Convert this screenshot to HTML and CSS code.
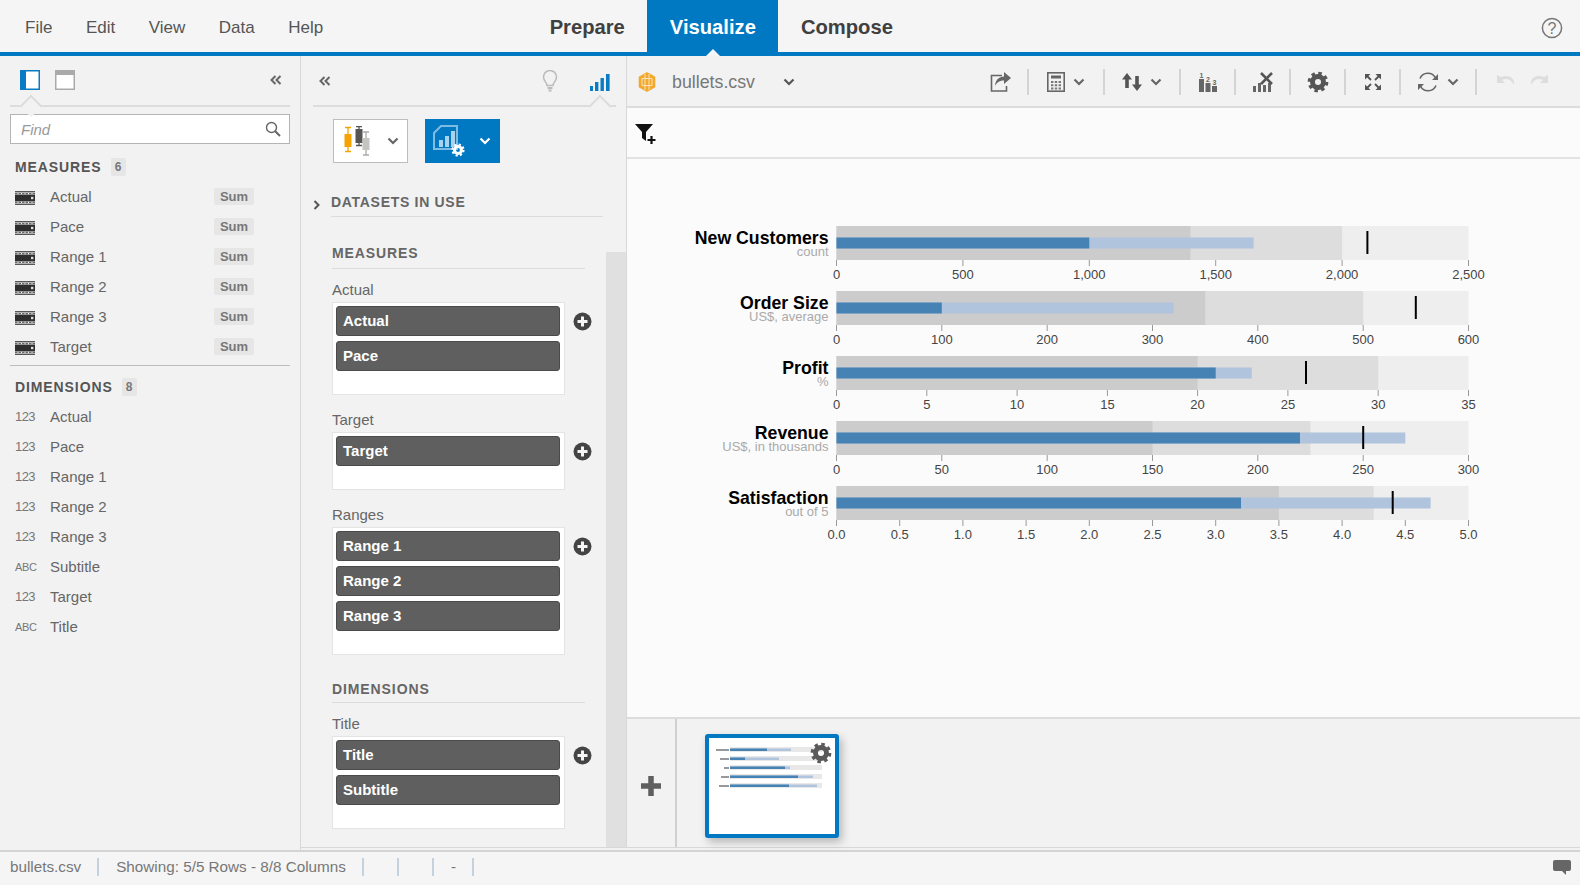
FILE: index.html
```html
<!DOCTYPE html>
<html lang="en">
<head>
    <meta charset="UTF-8">
    <title>bullets.csv - Visualize</title>
    <link rel="stylesheet" href="styles.css">
</head>
<body>
    <svg class="defs" width="0" height="0">
        <symbol id="i-measure" viewBox="0 0 20 14">
            <rect y="0" width="20" height="1.4" fill="#555"/>
            <path d="M0 2.7h20" stroke="#666" stroke-width="1.2" stroke-dasharray="2.5 1"/>
            <rect y="3.6" width="20" height="6.8" fill="#2e2e2e"/>
            <rect x="16" y="5.8" width="2.4" height="2.4" fill="#ddd"/>
            <path d="M0 11.3h20" stroke="#666" stroke-width="1.2" stroke-dasharray="2.5 1"/>
            <rect y="12.6" width="20" height="1.4" fill="#555"/>
        </symbol>
        <symbol id="i-chev" viewBox="0 0 12 8">
            <path d="M1.5 1.5L6 6l4.5-4.5" fill="none" stroke="currentColor" stroke-width="2.2"/>
        </symbol>
        <symbol id="i-back" viewBox="0 0 12 10">
            <path d="M5.5 1L1.5 5l4 4M10.5 1l-4 4 4 4" fill="none" stroke="#666" stroke-width="2"/>
        </symbol>
        <symbol id="i-plus" viewBox="0 0 19 19">
            <circle cx="9.5" cy="9.5" r="9" fill="#444"/>
            <path d="M9.5 4.5v10M4.5 9.5h10" stroke="#f5f5f5" stroke-width="3"/>
        </symbol>
        <symbol id="i-gear" viewBox="0 0 24 24">
            <circle cx="12" cy="12" r="6" fill="none" stroke="currentColor" stroke-width="5.4"/>
            <circle cx="12" cy="12" r="9.6" fill="none" stroke="currentColor" stroke-width="3.4" stroke-dasharray="3.8 3.74"/>
        </symbol>
    </svg>

    <header class="topbar">
        <nav class="menu">
            <span>File</span>
            <span>Edit</span>
            <span>View</span>
            <span>Data</span>
            <span>Help</span>
        </nav>
        <nav class="tabs">
            <span class="tab">Prepare</span>
            <span class="tab tab-on">Visualize</span>
            <span class="tab">Compose</span>
        </nav>
        <svg class="help" width="22" height="22" viewBox="0 0 22 22">
            <circle cx="11" cy="11" r="9.6" fill="none" stroke="#777" stroke-width="1.5"/>
            <text x="11" y="16.5" text-anchor="middle" class="help-q">?</text>
        </svg>
    </header>

    <main class="main">
        <aside class="left">
            <div class="panel-head panel-head-left">
                <svg width="20" height="20" viewBox="0 0 20 20">
                    <rect x="0.75" y="0.75" width="18.5" height="18.5" fill="#fff" stroke="#0a7cc4" stroke-width="1.5"/>
                    <rect x="0" y="0" width="6" height="20" fill="#0a7cc4"/>
                </svg>
                <svg class="head-second" width="20" height="20" viewBox="0 0 20 20">
                    <rect x="0.75" y="0.75" width="18.5" height="18.5" fill="#fff" stroke="#aaa" stroke-width="1.5"/>
                    <rect x="0" y="0" width="20" height="5" fill="#aaa"/>
                </svg>
                <svg class="head-back" width="12" height="10"><use href="#i-back"/></svg>
            </div>
            <div class="find">
                <span>Find</span>
                <svg width="16" height="16" viewBox="0 0 16 16">
                    <circle cx="6.5" cy="6.5" r="5" fill="none" stroke="#666" stroke-width="1.4"/>
                    <path d="M10.2 10.2L15 15" stroke="#666" stroke-width="2"/>
                </svg>
            </div>

            <h3 class="list-head">MEASURES <b class="count">6</b></h3>
            <ul class="fields">
                <li><svg width="20" height="14"><use href="#i-measure"/></svg><span class="name">Actual</span><b class="sum">Sum</b></li>
                <li><svg width="20" height="14"><use href="#i-measure"/></svg><span class="name">Pace</span><b class="sum">Sum</b></li>
                <li><svg width="20" height="14"><use href="#i-measure"/></svg><span class="name">Range 1</span><b class="sum">Sum</b></li>
                <li><svg width="20" height="14"><use href="#i-measure"/></svg><span class="name">Range 2</span><b class="sum">Sum</b></li>
                <li><svg width="20" height="14"><use href="#i-measure"/></svg><span class="name">Range 3</span><b class="sum">Sum</b></li>
                <li><svg width="20" height="14"><use href="#i-measure"/></svg><span class="name">Target</span><b class="sum">Sum</b></li>
            </ul>
            <hr class="rule">
            <h3 class="list-head list-head-dim">DIMENSIONS <b class="count">8</b></h3>
            <ul class="fields">
                <li><i class="num">123</i><span class="name">Actual</span></li>
                <li><i class="num">123</i><span class="name">Pace</span></li>
                <li><i class="num">123</i><span class="name">Range 1</span></li>
                <li><i class="num">123</i><span class="name">Range 2</span></li>
                <li><i class="num">123</i><span class="name">Range 3</span></li>
                <li><i class="abc">ABC</i><span class="name">Subtitle</span></li>
                <li><i class="num">123</i><span class="name">Target</span></li>
                <li><i class="abc">ABC</i><span class="name">Title</span></li>
            </ul>
        </aside>

        <section class="mid">
            <div class="track"></div>
            <div class="panel-head panel-head-mid">
                <svg width="12" height="10"><use href="#i-back"/></svg>
                <svg class="bulb" width="16" height="22" viewBox="0 0 16 22">
                    <path d="M5 15.5C5 12.5 1.5 11 1.5 7a6.5 6.5 0 0 1 13 0c0 4-3.5 5.5-3.5 8.5z" fill="none" stroke="#bbb" stroke-width="1.5"/>
                    <path d="M5.5 18h5M6.5 20.5h3" stroke="#bbb" stroke-width="2"/>
                </svg>
                <svg class="bars" width="20" height="17" viewBox="0 0 20 17">
                    <rect x="0" y="12" width="3" height="5" fill="#0a7cc4"/>
                    <rect x="5" y="8" width="3.4" height="9" fill="#0a7cc4"/>
                    <rect x="10.5" y="4" width="3.4" height="13" fill="#0a7cc4"/>
                    <rect x="16" y="0" width="3.6" height="17" fill="#0a7cc4"/>
                </svg>
            </div>

            <div class="chart-btns">
                <div class="chart-btn">
                    <svg width="30" height="30" viewBox="0 0 30 30">
                        <path d="M4 1.5h6M7 1.5v24M4 25.5h6" stroke="#f5a300" stroke-width="1.3" fill="none"/>
                        <rect x="3.5" y="8" width="7" height="13" fill="#f5a300"/>
                        <path d="M15 0.5h6M18 0.5v19M15 19.5h6" stroke="#555" stroke-width="1.3" fill="none"/>
                        <rect x="14.5" y="3" width="7" height="14" fill="#555"/>
                        <path d="M22 6h6M25 6v23M22 29h6" stroke="#aaa" stroke-width="1.3" fill="none"/>
                        <rect x="21.5" y="12" width="7" height="12" fill="#c4c4c0"/>
                    </svg>
                    <svg class="btn-chev" width="12" height="8"><use href="#i-chev"/></svg>
                </div>
                <div class="chart-btn chart-btn-on">
                    <svg width="32" height="32" viewBox="0 0 32 32">
                        <path d="M8 1h16v23H1V8z" fill="none" stroke="#7fbce4" stroke-width="2"/>
                        <rect x="6" y="15" width="4" height="7" fill="#a9d2ee"/>
                        <rect x="12" y="11" width="4" height="11" fill="#a9d2ee"/>
                        <rect x="18" y="6" width="4" height="16" fill="#a9d2ee"/>
                        <use href="#i-gear" x="18" y="18" width="14" height="14" color="#fff"/>
                    </svg>
                    <svg class="btn-chev" width="12" height="8"><use href="#i-chev"/></svg>
                </div>
            </div>

            <div class="datasets">
                <svg width="8" height="12" viewBox="0 0 8 12"><path d="M1.5 2l4 4-4 4" fill="none" stroke="#555" stroke-width="2"/></svg>
                <h3>DATASETS IN USE</h3>
            </div>

            <h3 class="group-head">MEASURES</h3>
            <label class="field-label">Actual</label>
            <div class="drop-row">
                <div class="drop">
                    <div class="pill">Actual</div>
                    <div class="pill">Pace</div>
                </div>
                <svg class="plus" width="19" height="19"><use href="#i-plus"/></svg>
            </div>
            <label class="field-label">Target</label>
            <div class="drop-row">
                <div class="drop">
                    <div class="pill">Target</div>
                </div>
                <svg class="plus" width="19" height="19"><use href="#i-plus"/></svg>
            </div>
            <label class="field-label">Ranges</label>
            <div class="drop-row">
                <div class="drop">
                    <div class="pill">Range 1</div>
                    <div class="pill">Range 2</div>
                    <div class="pill">Range 3</div>
                </div>
                <svg class="plus" width="19" height="19"><use href="#i-plus"/></svg>
            </div>

            <h3 class="group-head group-head-dim">DIMENSIONS</h3>
            <label class="field-label">Title</label>
            <div class="drop-row">
                <div class="drop">
                    <div class="pill">Title</div>
                    <div class="pill">Subtitle</div>
                </div>
                <svg class="plus" width="19" height="19"><use href="#i-plus"/></svg>
            </div>
        </section>

        <section class="right">
            <div class="toolbar">
                <svg class="hex" width="20" height="20" viewBox="0 0 20 20">
                    <path d="M10 1l7.5 4.3v9.4L10 19l-7.5-4.3V5.3z" fill="#f2a92e" stroke="#f2a92e" stroke-width="1.6" stroke-linejoin="round"/>
                    <path d="M5 6.5h10v7H5zM8 2v16M12 2v16" fill="none" stroke="#fbe3b8" stroke-width="1"/>
                </svg>
                <span class="file-name">bullets.csv</span>
                <svg class="file-chev" width="12" height="8"><use href="#i-chev"/></svg>

                <div class="tools">
                    <div class="tool tool-sep">
                        <svg width="22" height="20" viewBox="0 0 22 20">
                            <path d="M12 3.5H1.5V19h15v-5" fill="none" stroke="#666" stroke-width="1.6"/>
                            <path d="M14 0l7 6-7 6V8.5C10 8.5 7 10 5 14c.5-6 4-9.5 9-9.5z" fill="#666"/>
                        </svg>
                    </div>
                    <div class="tool tool-wide tool-sep">
                        <svg width="18" height="20" viewBox="0 0 18 20">
                            <rect x="0.8" y="0.8" width="16.4" height="18.4" fill="none" stroke="#666" stroke-width="1.6"/>
                            <rect x="4" y="3.5" width="10" height="3" fill="#666"/>
                            <path d="M4 9h2.4v2H4zM7.8 9h2.4v2H7.8zM11.6 9H14v2h-2.4zM4 12.3h2.4v2H4zM7.8 12.3h2.4v2H7.8zM11.6 12.3H14v2h-2.4zM4 15.5h2.4v2H4zM7.8 15.5h2.4v2H7.8zM11.6 15.5H14v2h-2.4z" fill="#777"/>
                        </svg>
                        <svg width="12" height="8"><use href="#i-chev"/></svg>
                    </div>
                    <div class="tool tool-wide tool-sep">
                        <svg width="20" height="20" viewBox="0 0 20 20">
                            <path d="M5 1l5 6.5H6.8V16H3.2V7.5H0zM15 19l5-6.5h-3.200V4h-3.600v8.500H10z" fill="#555"/>
                        </svg>
                        <svg width="12" height="8"><use href="#i-chev"/></svg>
                    </div>
                    <div class="tool tool-sep">
                        <svg width="20" height="20" viewBox="0 0 20 20">
                            <rect x="1" y="7" width="5" height="13" fill="#666"/>
                            <rect x="7.5" y="11" width="5" height="9" fill="#666"/>
                            <rect x="14" y="14" width="5" height="6" fill="#666"/>
                            <text x="3.5" y="5.5" class="tiny-num">1</text>
                            <text x="10" y="9.5" class="tiny-num">2</text>
                            <text x="16.5" y="12.5" class="tiny-num">3</text>
                        </svg>
                    </div>
                    <div class="tool tool-sep">
                        <svg width="20" height="20" viewBox="0 0 20 20">
                            <rect x="0" y="14" width="3" height="6" fill="#666"/>
                            <rect x="5" y="11" width="3" height="9" fill="#666"/>
                            <rect x="10" y="13" width="3" height="7" fill="#666"/>
                            <rect x="15" y="11" width="3" height="9" fill="#666"/>
                            <path d="M8 1l11 11M19 1L8 12" stroke="#555" stroke-width="2.6"/>
                        </svg>
                    </div>
                    <div class="tool tool-sep">
                        <svg class="tool-gear" width="22" height="22"><use href="#i-gear"/></svg>
                    </div>
                    <div class="tool tool-sep">
                        <svg width="18" height="18" viewBox="0 0 18 18">
                            <path d="M1 1h5.5L1 6.5zM17 1h-5.5L17 6.5zM1 17h5.5L1 11.5zM17 17h-5.5l5.5-5.5z" fill="#555"/>
                            <path d="M2.5 2.5L7 7M15.5 2.5L11 7M2.5 15.5L7 11M15.5 15.5L11 11" stroke="#555" stroke-width="1.8"/>
                        </svg>
                    </div>
                    <div class="tool tool-wide tool-sep">
                        <svg width="22" height="20" viewBox="0 0 22 20">
                            <path d="M3 6.5A8.5 8.5 0 0 1 18.5 6" fill="none" stroke="#666" stroke-width="1.6"/>
                            <path d="M19 13.5A8.5 8.5 0 0 1 3.5 14" fill="none" stroke="#666" stroke-width="1.6"/>
                            <path d="M21 2v6h-6zM1 18v-6h6z" fill="#666"/>
                        </svg>
                        <svg width="12" height="8"><use href="#i-chev"/></svg>
                    </div>
                    <div class="tool-undo">
                        <svg width="20" height="16" viewBox="0 0 20 16">
                            <path d="M0 1v8h8L5 6c4-2 9-1 12 5 1-7-5-11-13-8z" fill="#ddd"/>
                        </svg>
                        <svg width="20" height="16" viewBox="0 0 20 16">
                            <path d="M20 1v8h-8l3-3C11 4 6 5 3 11 2 4 8 0 16 3z" fill="#ddd"/>
                        </svg>
                    </div>
                </div>
            </div>

            <div class="filterbar">
                <svg width="22" height="22" viewBox="0 0 22 22">
                    <path d="M0 1h18l-7 8v9l-4-3V9z" fill="#111"/>
                    <path d="M16.5 13v8M12.5 17h8" stroke="#111" stroke-width="2.2"/>
                </svg>
            </div>

            <div class="canvas">
                <svg class="bullets" width="820" height="335" viewBox="680 215 820 335">
                    <g transform="translate(836.5 226)">
                        <rect class="r3" width="632" height="34"/>
                        <rect class="r2" width="505.6" height="34"/>
                        <rect class="r1" width="353.9" height="34"/>
                        <rect class="m1" y="11.5" width="417.1" height="11"/>
                        <rect class="m2" y="11.5" width="252.8" height="11"/>
                        <rect class="mark" x="529.9" y="5" width="2" height="23"/>
                        <text class="t-title" x="-8" y="18">New Customers</text>
                        <text class="t-sub" x="-8" y="30">count</text>
                        <path class="ticks" d="M0 34v6M126.4 34v6M252.8 34v6M379.2 34v6M505.6 34v6M632 34v6"/>
                        <text class="t-tick" x="0" y="53">0</text>
                        <text class="t-tick" x="126.4" y="53">500</text>
                        <text class="t-tick" x="252.8" y="53">1,000</text>
                        <text class="t-tick" x="379.2" y="53">1,500</text>
                        <text class="t-tick" x="505.6" y="53">2,000</text>
                        <text class="t-tick" x="632" y="53">2,500</text>
                    </g>
                    <g transform="translate(836.5 291)">
                        <rect class="r3" width="632" height="34"/>
                        <rect class="r2" width="526.7" height="34"/>
                        <rect class="r1" width="368.7" height="34"/>
                        <rect class="m1" y="11.5" width="337.1" height="11"/>
                        <rect class="m2" y="11.5" width="105.3" height="11"/>
                        <rect class="mark" x="578.3" y="5" width="2" height="23"/>
                        <text class="t-title" x="-8" y="18">Order Size</text>
                        <text class="t-sub" x="-8" y="30">US$, average</text>
                        <path class="ticks" d="M0 34v6M105.3 34v6M210.7 34v6M316 34v6M421.3 34v6M526.7 34v6M632 34v6"/>
                        <text class="t-tick" x="0" y="53">0</text>
                        <text class="t-tick" x="105.3" y="53">100</text>
                        <text class="t-tick" x="210.7" y="53">200</text>
                        <text class="t-tick" x="316" y="53">300</text>
                        <text class="t-tick" x="421.3" y="53">400</text>
                        <text class="t-tick" x="526.7" y="53">500</text>
                        <text class="t-tick" x="632" y="53">600</text>
                    </g>
                    <g transform="translate(836.5 356)">
                        <rect class="r3" width="632" height="34"/>
                        <rect class="r2" width="541.7" height="34"/>
                        <rect class="r1" width="361.1" height="34"/>
                        <rect class="m1" y="11.5" width="415.3" height="11"/>
                        <rect class="m2" y="11.5" width="379.2" height="11"/>
                        <rect class="mark" x="468.5" y="5" width="2" height="23"/>
                        <text class="t-title" x="-8" y="18">Profit</text>
                        <text class="t-sub" x="-8" y="30">%</text>
                        <path class="ticks" d="M0 34v6M90.3 34v6M180.6 34v6M270.9 34v6M361.1 34v6M451.4 34v6M541.7 34v6M632 34v6"/>
                        <text class="t-tick" x="0" y="53">0</text>
                        <text class="t-tick" x="90.3" y="53">5</text>
                        <text class="t-tick" x="180.6" y="53">10</text>
                        <text class="t-tick" x="270.9" y="53">15</text>
                        <text class="t-tick" x="361.1" y="53">20</text>
                        <text class="t-tick" x="451.4" y="53">25</text>
                        <text class="t-tick" x="541.7" y="53">30</text>
                        <text class="t-tick" x="632" y="53">35</text>
                    </g>
                    <g transform="translate(836.5 421)">
                        <rect class="r3" width="632" height="34"/>
                        <rect class="r2" width="474" height="34"/>
                        <rect class="r1" width="316" height="34"/>
                        <rect class="m1" y="11.5" width="568.8" height="11"/>
                        <rect class="m2" y="11.5" width="463.5" height="11"/>
                        <rect class="mark" x="525.7" y="5" width="2" height="23"/>
                        <text class="t-title" x="-8" y="18">Revenue</text>
                        <text class="t-sub" x="-8" y="30">US$, in thousands</text>
                        <path class="ticks" d="M0 34v6M105.3 34v6M210.7 34v6M316 34v6M421.3 34v6M526.7 34v6M632 34v6"/>
                        <text class="t-tick" x="0" y="53">0</text>
                        <text class="t-tick" x="105.3" y="53">50</text>
                        <text class="t-tick" x="210.7" y="53">100</text>
                        <text class="t-tick" x="316" y="53">150</text>
                        <text class="t-tick" x="421.3" y="53">200</text>
                        <text class="t-tick" x="526.7" y="53">250</text>
                        <text class="t-tick" x="632" y="53">300</text>
                    </g>
                    <g transform="translate(836.5 486)">
                        <rect class="r3" width="632" height="34"/>
                        <rect class="r2" width="537.2" height="34"/>
                        <rect class="r1" width="442.4" height="34"/>
                        <rect class="m1" y="11.5" width="594.1" height="11"/>
                        <rect class="m2" y="11.5" width="404.5" height="11"/>
                        <rect class="mark" x="555.2" y="5" width="2" height="23"/>
                        <text class="t-title" x="-8" y="18">Satisfaction</text>
                        <text class="t-sub" x="-8" y="30">out of 5</text>
                        <path class="ticks" d="M0 34v6M63.2 34v6M126.4 34v6M189.6 34v6M252.8 34v6M316 34v6M379.2 34v6M442.4 34v6M505.6 34v6M568.8 34v6M632 34v6"/>
                        <text class="t-tick" x="0" y="53">0.0</text>
                        <text class="t-tick" x="63.2" y="53">0.5</text>
                        <text class="t-tick" x="126.4" y="53">1.0</text>
                        <text class="t-tick" x="189.6" y="53">1.5</text>
                        <text class="t-tick" x="252.8" y="53">2.0</text>
                        <text class="t-tick" x="316" y="53">2.5</text>
                        <text class="t-tick" x="379.2" y="53">3.0</text>
                        <text class="t-tick" x="442.4" y="53">3.5</text>
                        <text class="t-tick" x="505.6" y="53">4.0</text>
                        <text class="t-tick" x="568.8" y="53">4.5</text>
                        <text class="t-tick" x="632" y="53">5.0</text>
                    </g>
                </svg>
            </div>

            <div class="strip">
                <div class="strip-add">
                    <svg width="20" height="20" viewBox="0 0 20 20"><path d="M10 0v20M0 10h20" stroke="#5f5f5f" stroke-width="5.5"/></svg>
                </div>
                <div class="strip-cards">
                    <div class="thumb">
                        <svg class="thumb-chart" width="126" height="96" viewBox="0 0 126 96">
                            <rect x="7" y="11" width="13" height="2" fill="#999"/>
                            <rect x="21" y="9" width="92" height="5" fill="#e8e8e8"/>
                            <rect x="21" y="10.5" width="61" height="2.5" fill="#b0c4de"/>
                            <rect x="21" y="10.5" width="37" height="2.5" fill="#4682b4"/>
                            <rect x="11" y="20" width="9" height="2" fill="#999"/>
                            <rect x="21" y="18" width="92" height="5" fill="#e8e8e8"/>
                            <rect x="21" y="19.5" width="49" height="2.5" fill="#b0c4de"/>
                            <rect x="21" y="19.5" width="15" height="2.5" fill="#4682b4"/>
                            <rect x="15" y="29" width="5" height="2" fill="#999"/>
                            <rect x="21" y="27" width="92" height="5" fill="#e8e8e8"/>
                            <rect x="21" y="28.5" width="60" height="2.5" fill="#b0c4de"/>
                            <rect x="21" y="28.5" width="55" height="2.5" fill="#4682b4"/>
                            <rect x="12" y="38" width="8" height="2" fill="#999"/>
                            <rect x="21" y="36" width="92" height="5" fill="#e8e8e8"/>
                            <rect x="21" y="37.5" width="83" height="2.5" fill="#b0c4de"/>
                            <rect x="21" y="37.5" width="68" height="2.5" fill="#4682b4"/>
                            <rect x="10" y="47" width="10" height="2" fill="#999"/>
                            <rect x="21" y="45" width="92" height="5" fill="#e8e8e8"/>
                            <rect x="21" y="46.5" width="87" height="2.5" fill="#b0c4de"/>
                            <rect x="21" y="46.5" width="59" height="2.5" fill="#4682b4"/>
                        </svg>
                        <svg class="thumb-gear" width="22" height="22"><use href="#i-gear"/></svg>
                    </div>
                </div>
            </div>
        </section>
    </main>

    <footer class="status">
        <span class="st-cell">bullets.csv</span>
        <span class="st-cell">Showing: 5/5 Rows - 8/8 Columns</span>
        <span class="st-cell st-blank"></span>
        <span class="st-cell st-blank"></span>
        <span class="st-cell">-</span>
        <svg class="chat" width="18" height="15" viewBox="0 0 18 15">
            <path d="M2 0h14a2 2 0 0 1 2 2v7a2 2 0 0 1-2 2h-3v4l-4-4H2a2 2 0 0 1-2-2V2a2 2 0 0 1 2-2z" fill="#666"/>
        </svg>
    </footer>
</body>
</html>
```

FILE: styles.css
```css
* {
    box-sizing: border-box;
}

html, body {
    margin: 0;
    padding: 0;
}

body {
    width: 1580px;
    height: 885px;
    overflow: hidden;
    display: flex;
    flex-direction: column;
    background: #f2f2f2;
    color: #666;
    font-family: "Liberation Sans", Arial, sans-serif;
    font-size: 15px;
}

h3 {
    margin: 0;
}

ul {
    list-style: none;
    margin: 0;
    padding: 0;
}

svg {
    display: block;
    flex: none;
}

.defs {
    position: absolute;
}

/* top bar */
.topbar {
    height: 56px;
    flex: none;
    display: flex;
    align-items: stretch;
    background: #f5f5f5;
    border-bottom: 4px solid #0179c2;
}

.menu {
    display: flex;
    align-items: center;
    gap: 33.5px;
    padding: 3px 0 0 25px;
    font-size: 17px;
    color: #555;
}

.tabs {
    display: flex;
    margin-left: 204px;
    font-size: 20.2px;
    font-weight: bold;
    color: #404040;
}

.tab {
    display: flex;
    align-items: center;
    padding: 3px 22.5px 0;
}

.tab-on {
    position: relative;
    background: #0179c2;
    color: #fff;
}

.tab-on::after {
    content: "";
    position: absolute;
    left: 50%;
    bottom: -4px;
    margin-left: -7px;
    border: 7px solid transparent;
    border-top: 0;
    border-bottom-color: #f5f5f5;
}

.help {
    margin: 17px 17px 0 auto;
}

.help-q {
    font-size: 16px;
    fill: #777;
}

/* panels */
.main {
    flex: 1;
    display: flex;
    min-height: 0;
}

.left {
    width: 301px;
    flex: none;
    border-right: 1px solid #d8d8d8;
    padding: 0 10px;
}

.panel-head {
    position: relative;
    height: 51px;
    display: flex;
    align-items: center;
    border-bottom: 2px solid #dcdcdc;
}

.panel-head::after {
    content: "";
    position: absolute;
    bottom: -2px;
    width: 14px;
    height: 14px;
    transform: translateY(7px) rotate(45deg);
    border-left: 2px solid #dcdcdc;
    border-top: 2px solid #dcdcdc;
    background: #f2f2f2;
}

.panel-head-left {
    padding: 0 0 2px 10px;
}

.panel-head-left::after {
    left: 13px;
}

.head-second {
    margin-left: 15px;
}

.head-back {
    margin-left: auto;
    margin-right: 8px;
}

.find {
    height: 30px;
    margin-top: 7px;
    display: flex;
    align-items: center;
    justify-content: space-between;
    padding: 0 8px 0 10px;
    background: #fff;
    border: 1px solid #b4b4b4;
    font-style: italic;
    color: #999;
}

.list-head {
    height: 20px;
    margin: 13px 0 0 5px;
    display: flex;
    align-items: center;
    gap: 9px;
    font-size: 14px;
    letter-spacing: 0.9px;
    color: #555;
}

.list-head-dim {
    margin-top: 11px;
}

.count {
    width: 15px;
    height: 18px;
    display: flex;
    align-items: center;
    justify-content: center;
    background: #e6e6e6;
    border-radius: 2px;
    font-size: 12px;
    letter-spacing: 0;
    color: #777;
}

.fields {
    margin-top: 4.5px;
}

.fields svg {
    margin-top: 2px;
}

.fields li {
    height: 30px;
    display: flex;
    align-items: center;
    padding-left: 5px;
}

.name {
    margin-left: 15px;
}

.num, .abc {
    width: 20px;
    font-style: normal;
    color: #777;
}

.num {
    font-size: 13px;
    letter-spacing: -0.6px;
}

.abc {
    font-size: 11px;
    letter-spacing: -0.3px;
}

.sum {
    width: 40px;
    height: 17px;
    margin-left: auto;
    margin-right: 36px;
    display: flex;
    align-items: center;
    justify-content: center;
    background: #e6e6e6;
    border-radius: 2px;
    font-size: 13px;
    color: #777;
}

.rule {
    height: 1px;
    margin: 3.5px 0 0;
    border: 0;
    background: #bdbdbd;
}

/* middle panel */
.mid {
    position: relative;
    width: 326px;
    flex: none;
    margin-bottom: 2px;
    border-right: 1px solid #d8d8d8;
    border-bottom: 1px solid #d8d8d8;
    overflow: hidden;
}

.track {
    position: absolute;
    top: 196px;
    right: 0;
    bottom: 0;
    width: 20px;
    background: #e0e0e0;
}

.panel-head-mid {
    margin: 0 10px 0 12px;
    padding-left: 6px;
}

.panel-head-mid::after {
    right: 8px;
}

.bulb {
    margin-left: auto;
}

.bars {
    margin: 3px 6px 0 32px;
}

.chart-btns {
    display: flex;
    gap: 17px;
    margin: 12px 0 0 32px;
}

.chart-btn {
    width: 75px;
    height: 44px;
    display: flex;
    align-items: center;
    padding-left: 7px;
    background: #fff;
    border: 1px solid #bdbdbd;
    color: #666;
}

.chart-btn-on {
    background: #0179c2;
    border-color: #0179c2;
    color: #fff;
}

.btn-chev {
    margin-left: 16px;
}

.chart-btn-on .btn-chev {
    margin-left: 14px;
}

.datasets {
    display: flex;
    align-items: center;
    margin: 29px 23px 0 12px;
}

.datasets svg {
    margin-right: 10px;
}

.datasets h3 {
    flex: 1;
    height: 25px;
    padding-top: 2px;
    border-bottom: 1px solid #dcdcdc;
    font-size: 14px;
    letter-spacing: 0.7px;
    color: #666;
}

.group-head {
    height: 28px;
    width: 253px;
    margin: 24px 0 0 31px;
    padding-top: 4px;
    border-bottom: 1px solid #dcdcdc;
    font-size: 14px;
    letter-spacing: 0.9px;
    color: #666;
}

.group-head-dim {
    height: 27px;
    margin-top: 21px;
    padding-top: 5px;
}

.field-label {
    display: block;
    height: 18px;
    margin: 16px 0 3px 31px;
    line-height: 18px;
}

.group-head + .field-label {
    margin-top: 12px;
}

.drop-row {
    display: flex;
    align-items: flex-start;
    margin-left: 31px;
}

.drop {
    width: 233px;
    padding: 3px 4px 23px 3px;
    display: flex;
    flex-direction: column;
    gap: 5px;
    background: #fff;
    border: 1px solid #e4e4e4;
}

.pill {
    height: 30px;
    padding-left: 6px;
    line-height: 28px;
    background: #5f5f5f;
    border: 1px solid #4a4a4a;
    border-radius: 3px;
    font-weight: bold;
    color: #fff;
}

.plus {
    margin: 10px 0 0 8px;
}

/* right side */
.right {
    flex: 1;
    min-width: 0;
    display: flex;
    flex-direction: column;
    margin-bottom: 2px;
    border-bottom: 1px solid #d8d8d8;
}

.toolbar {
    height: 52px;
    flex: none;
    display: flex;
    align-items: center;
    padding: 2px 0 0 10px;
    border-bottom: 2px solid #dcdcdc;
}

.file-name {
    margin-left: 15px;
    font-size: 17.8px;
    color: #777;
}

.file-chev {
    margin-left: 28px;
    color: #555;
}

.tools {
    display: flex;
    align-items: center;
    margin-left: auto;
    padding-right: 32px;
    color: #666;
}

.tool {
    width: 55px;
    height: 26px;
    display: flex;
    align-items: center;
    justify-content: center;
    gap: 8px;
}

.tool-wide {
    width: 76px;
}

.tool-sep {
    border-right: 2px solid #d4d4d4;
}

.tool-gear {
    color: #555;
}

.tiny-num {
    font-size: 7px;
    font-weight: bold;
    text-anchor: middle;
    fill: #666;
}

.tool-undo {
    display: flex;
    gap: 11px;
    margin-left: 20px;
}

.filterbar {
    height: 51px;
    flex: none;
    padding: 15px 0 0 8px;
    background: #fbfbfb;
    border-bottom: 2px solid #e2e2e2;
}

.canvas {
    flex: 1;
    min-height: 0;
    padding: 56px 0 0 53px;
    background: #fbfbfb;
}

.r1 { fill: #ccc; }
.r2 { fill: #ddd; }
.r3 { fill: #eee; }
.m1 { fill: #b0c4de; }
.m2 { fill: #4682b4; }
.mark { fill: #000; }

.ticks {
    stroke: #999;
    stroke-width: 1;
    fill: none;
}

.t-title {
    font-size: 17.7px;
    font-weight: bold;
    text-anchor: end;
    fill: #000;
}

.t-sub {
    font-size: 13px;
    text-anchor: end;
    fill: #aaa;
}

.t-tick {
    font-size: 13px;
    text-anchor: middle;
    fill: #444;
}

.strip {
    height: 130px;
    flex: none;
    display: flex;
    border-top: 2px solid #dcdcdc;
}

.strip-add {
    width: 50px;
    flex: none;
    display: flex;
    align-items: center;
    justify-content: center;
    padding-top: 6px;
    border-right: 2px solid #d0d0d0;
}

.strip-cards {
    flex: 1;
    padding: 15px 0 0 28px;
}

.thumb {
    position: relative;
    width: 134px;
    height: 104px;
    background: #fff;
    border: 4px solid #0179c2;
    border-radius: 3px;
    box-shadow: 3px 4px 8px rgba(0, 0, 0, 0.25);
}

.thumb-chart {
    filter: blur(0.6px);
}

.thumb-gear {
    position: absolute;
    top: 4px;
    right: 3px;
    color: #5a5a5a;
}

/* status bar */
.status {
    height: 35px;
    flex: none;
    display: flex;
    align-items: center;
    padding: 0 0 3px 10px;
    background: #f5f5f5;
    border-top: 2px solid #d4d4d4;
    color: #777;
    font-size: 15.25px;
}

.st-cell {
    height: 18px;
    line-height: 18px;
    padding-right: 16px;
    margin-right: 17px;
    border-right: 2px solid #c4d2e0;
}

.st-blank {
    width: 18px;
}

.chat {
    margin-left: auto;
    margin-right: 9px;
}
```
